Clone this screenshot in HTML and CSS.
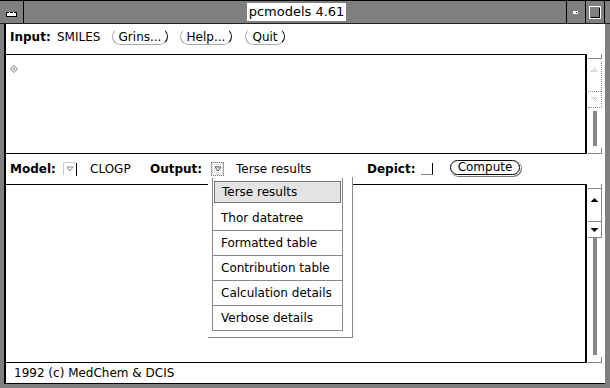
FILE: index.html
```html
<!DOCTYPE html>
<html>
<head>
<meta charset="utf-8">
<link rel="stylesheet" href="styles.css">
</head>
<body>
<div class="window dither">
  <div class="titlebar">
    <div class="wm-menu"><span class="wm-mark"></span></div>
    <div class="title-area"><span class="title">pcmodels 4.61</span></div>
    <div class="tb-btn">
      <svg width="18" height="20" viewBox="0 0 18 20"><rect x="6" y="9" width="5" height="3" fill="#fff"/><rect x="9" y="10" width="1" height="1" fill="#000"/></svg>
    </div>
    <div class="tb-btn">
      <svg width="18" height="20" viewBox="0 0 18 20"><rect x="3.5" y="4.5" width="11" height="12" fill="none" stroke="#fff"/><path d="M5 15.5h9M13.5 6v10" stroke="#000"/></svg>
    </div>
  </div>
  <div class="panel">
    <div class="row row1">
      <span class="lbl w-input">Input:</span>
      <span class="val w-smiles">SMILES</span>
      <span class="btn b-grins">Grins...</span>
      <span class="btn b-help">Help...</span>
      <span class="btn b-quit">Quit</span>
    </div>
    <div class="pane pane1">
      <div class="ta ta1">
        <svg class="caret" width="8" height="8" viewBox="0 0 8 8"><path d="M4 0.5 7.5 4 4 7.5 0.5 4Z" fill="#fff" stroke="#777"/><path d="M4 2.5 5.5 4 4 5.5 2.5 4Z" fill="#999"/></svg>
      </div>
      <div class="sb sb1">
        <div class="cap cap-top"></div>
        <div class="elev elev1">
          <div class="e-up"><svg width="13" height="6" viewBox="0 0 13 6"><path d="M3 5 6.5 1.5 10 5" fill="none" stroke="#999" stroke-dasharray="1 1"/><path d="M5 5 6.5 3.5 8 5" fill="none" stroke="#bbb"/></svg></div>
          <div class="e-down"><svg width="13" height="6" viewBox="0 0 13 6"><path d="M3 1 6.5 4.5 10 1" fill="none" stroke="#999" stroke-dasharray="1 1"/><path d="M5 1 6.5 2.5 8 1" fill="none" stroke="#bbb"/></svg></div>
        </div>
        <div class="cable"></div>
        <div class="cap cap-bot"></div>
      </div>
    </div>
    <div class="row row2">
      <span class="lbl w-model">Model:</span>
      <span class="mbox"><svg width="14" height="14" viewBox="0 0 14 14"><path d="M0.5 13V0.5H13" fill="none" stroke="#ccc"/><path d="M13.5 1v13" stroke="#000"/><path d="M4 5h6L7 9Z" fill="none" stroke="#888"/></svg></span>
      <span class="val w-clogp">CLOGP</span>
      <span class="lbl w-output">Output:</span>
      <span class="obox"><svg width="10" height="10" viewBox="0 0 10 10"><path d="M2 3h6L5 7Z" fill="none" stroke="#555"/></svg></span>
      <span class="val w-terse">Terse results</span>
      <span class="lbl w-depict">Depict:</span>
      <span class="check"></span>
      <span class="btn-def">Compute</span>
    </div>
    <div class="pane pane2">
      <div class="ta ta2"></div>
      <div class="sb sb2">
        <div class="cap cap-top"></div>
        <div class="elev elev2">
          <div class="e-up"><svg width="13" height="6" viewBox="0 0 13 6"><path d="M2.5 5 6.5 1 10.5 5Z" fill="#000"/></svg></div>
          <div class="e-down"><svg width="13" height="6" viewBox="0 0 13 6"><path d="M2.5 1 6.5 5 10.5 1Z" fill="#000"/></svg></div>
        </div>
        <div class="cable"></div>
        <div class="cap cap-bot"></div>
      </div>
    </div>
    <div class="footer">1992 (c) MedChem &amp; DCIS</div>
  </div>
  <div class="menu">
    <ul class="menu-list">
      <li class="mi mi-sel"><span class="sel-box">Terse results</span></li>
      <li class="mi">Thor datatree</li>
      <li class="mi">Formatted table</li>
      <li class="mi">Contribution table</li>
      <li class="mi">Calculation details</li>
      <li class="mi">Verbose details</li>
    </ul>
  </div>
</div>
</body>
</html>
```

FILE: styles.css
```css
* { box-sizing: border-box; margin: 0; padding: 0; }
html, body { width: 610px; height: 388px; overflow: hidden; }
body {
  font-family: "DejaVu Sans", "Liberation Sans", sans-serif;
  font-size: 12px;
  color: #000;
  background: #fff;
}
.dither {
  background-color: #808080;
  background-image:
    repeating-linear-gradient(0deg, #000 0 1px, #fff 1px 2px),
    repeating-linear-gradient(90deg, #000 0 1px, #fff 1px 2px);
  background-blend-mode: difference;
}
.window {
  position: relative;
  width: 610px;
  height: 388px;
  display: flex;
  flex-direction: column;
}

/* title bar */
.titlebar {
  height: 24px;
  display: flex;
  border-top: 1px solid #000;
  border-bottom: 1px solid #222;
}
.wm-menu {
  width: 24px;
  border-right: 1px solid #000;
  display: flex;
  align-items: center;
  justify-content: center;
  padding-top: 4px;
}
.wm-mark {
  display: block;
  width: 11px;
  height: 5px;
  background: #fff;
  border: 1px solid #000;
  border-top: 1px dashed #000;
}
.title-area {
  flex: 1;
  display: flex;
  align-items: center;
  justify-content: center;
  padding-left: 3px;
}
.title {
  background: #fff;
  font-size: 13px;
  line-height: 18px;
  height: 18px;
  padding: 0 2px;
}
.tb-btn {
  width: 19px;
  border-left: 1px solid #000;
  display: flex;
  align-items: center;
}
.tb-btn:last-child {
  width: 20px;
  border-right: 1px solid #000;
  margin-right: 5px;
}

/* main panel */
.panel {
  flex: 1;
  margin: 0 5px 4px 4px;
  border-left: 2px solid #000;
  border-bottom: 1px solid #000;
  background: #fff;
  display: flex;
  flex-direction: column;
}
.row {
  height: 30px;
  display: flex;
  align-items: center;
  padding-left: 4px;
  white-space: nowrap;
}
.row1 { padding-bottom: 5px; }
.row2 { padding-bottom: 0; }
.lbl { font-weight: bold; display: inline-block; }
.val { display: inline-block; }
.w-input { width: 47px; }
.w-smiles { width: 55px; }
.w-model { width: 53px; }
.w-clogp { width: 60px; }
.w-output { width: 61px; }
.w-terse { width: 131px; }
.w-depict { width: 54px; }

.btn {
  display: inline-flex;
  align-items: center;
  justify-content: center;
  height: 17px;
  border: 1px solid #aaa;
  border-top-color: #fff;
  border-right: 1.5px solid #000;
  border-radius: 9px;
  font-size: 12px;
}
.b-grins { width: 56px; margin-right: 12px; }
.b-help { width: 52px; margin-right: 13px; }
.b-quit { width: 40px; }

.mbox { width: 14px; height: 14px; margin-right: 13px; display: inline-flex; }
.obox {
  width: 13px;
  height: 14px;
  margin-right: 12px;
  display: inline-flex;
  align-items: center;
  justify-content: center;
  border: 1px dotted #777;
  background-color: #ccc;
  background-image:
    repeating-linear-gradient(0deg, #000 0 1px, #fff 1px 2px),
    repeating-linear-gradient(90deg, #999 0 1px, #fff 1px 2px);
  background-blend-mode: lighten;
}
.check {
  display: inline-block;
  width: 12px;
  height: 12px;
  margin-right: 17px;
  border-right: 1px solid #000;
  border-bottom: 1px solid #888;
}
.btn-def {
  display: inline-flex;
  align-items: center;
  justify-content: center;
  width: 70px;
  height: 15px;
  margin-bottom: 4px;
  border: 1px solid #000;
  border-radius: 8px;
  box-shadow: 0 0 0 1px #fff, 1px 1px 0 1px #777;
  font-size: 12px;
}

/* panes */
.pane { display: flex; }
.pane1 { height: 100px; }
.pane2 { flex: 1; }
.ta {
  flex: 1;
  border-top: 1px solid #000;
  border-bottom: 1px solid #000;
  border-right: 2px solid #000;
}
.ta1 { padding: 10px 0 0 4px; }
.caret { display: block; }

.sb {
  width: 18px;
  display: flex;
  flex-direction: column;
  align-items: flex-start;
  padding-left: 1px;
}
.cap {
  width: 14px;
  border-right: 1px solid #888;
  border-bottom: 1px solid #888;
}
.cap-top { height: 5px; }
.cap-bot { height: 6px; margin-top: 2px; }
.elev { width: 14px; display: flex; flex-direction: column; }
.e-up, .e-down { display: flex; justify-content: center; }
.cable {
  flex: 1;
  width: 4px;
  margin-left: 5px;
  background: #888;
}
.sb1 .cap-top { margin-bottom: 4px; }
.elev1 { height: 45px; margin-bottom: 3px; border-right: 1px dotted #888; border-bottom: 1px dotted #888; }
.elev1 .e-up { height: 29px; padding-top: 4px; border-bottom: 1px dotted #888; }
.elev1 .e-down { flex: 1; padding-top: 4px; }
.sb2 .cap-top { margin-bottom: 0; }
.elev2 { height: 49px; border-right: 1px solid #888; border-bottom: 1px solid #888; }
.elev2 .e-up { height: 33px; padding-top: 8px; border-bottom: 1px solid #888; }
.elev2 .e-down { flex: 1; padding-top: 5px; }

.footer {
  height: 20px;
  line-height: 20px;
  padding-left: 8px;
  white-space: nowrap;
}

/* popup menu */
.menu {
  position: absolute;
  left: 208px;
  top: 177px;
  width: 145px;
  height: 161px;
  padding: 1px 9px 6px 4px;
  background: #fff;
  border-right: 1px solid #888;
  border-bottom: 1px solid #888;
}
.menu-list {
  list-style: none;
  padding-top: 2px;
  border-left: 1px solid #888;
  border-right: 1px solid #888;
}
.mi {
  height: 25px;
  line-height: 24px;
  padding-left: 8px;
  border-bottom: 1px solid #888;
  white-space: nowrap;
}
.mi-sel {
  height: 26px;
  padding: 1px 1px 3px 1px;
  border-bottom: none;
}
.sel-box {
  display: block;
  height: 22px;
  line-height: 20px;
  padding-left: 7px;
  background: #e4e4e4;
  border: 1px solid #777;
}
```
